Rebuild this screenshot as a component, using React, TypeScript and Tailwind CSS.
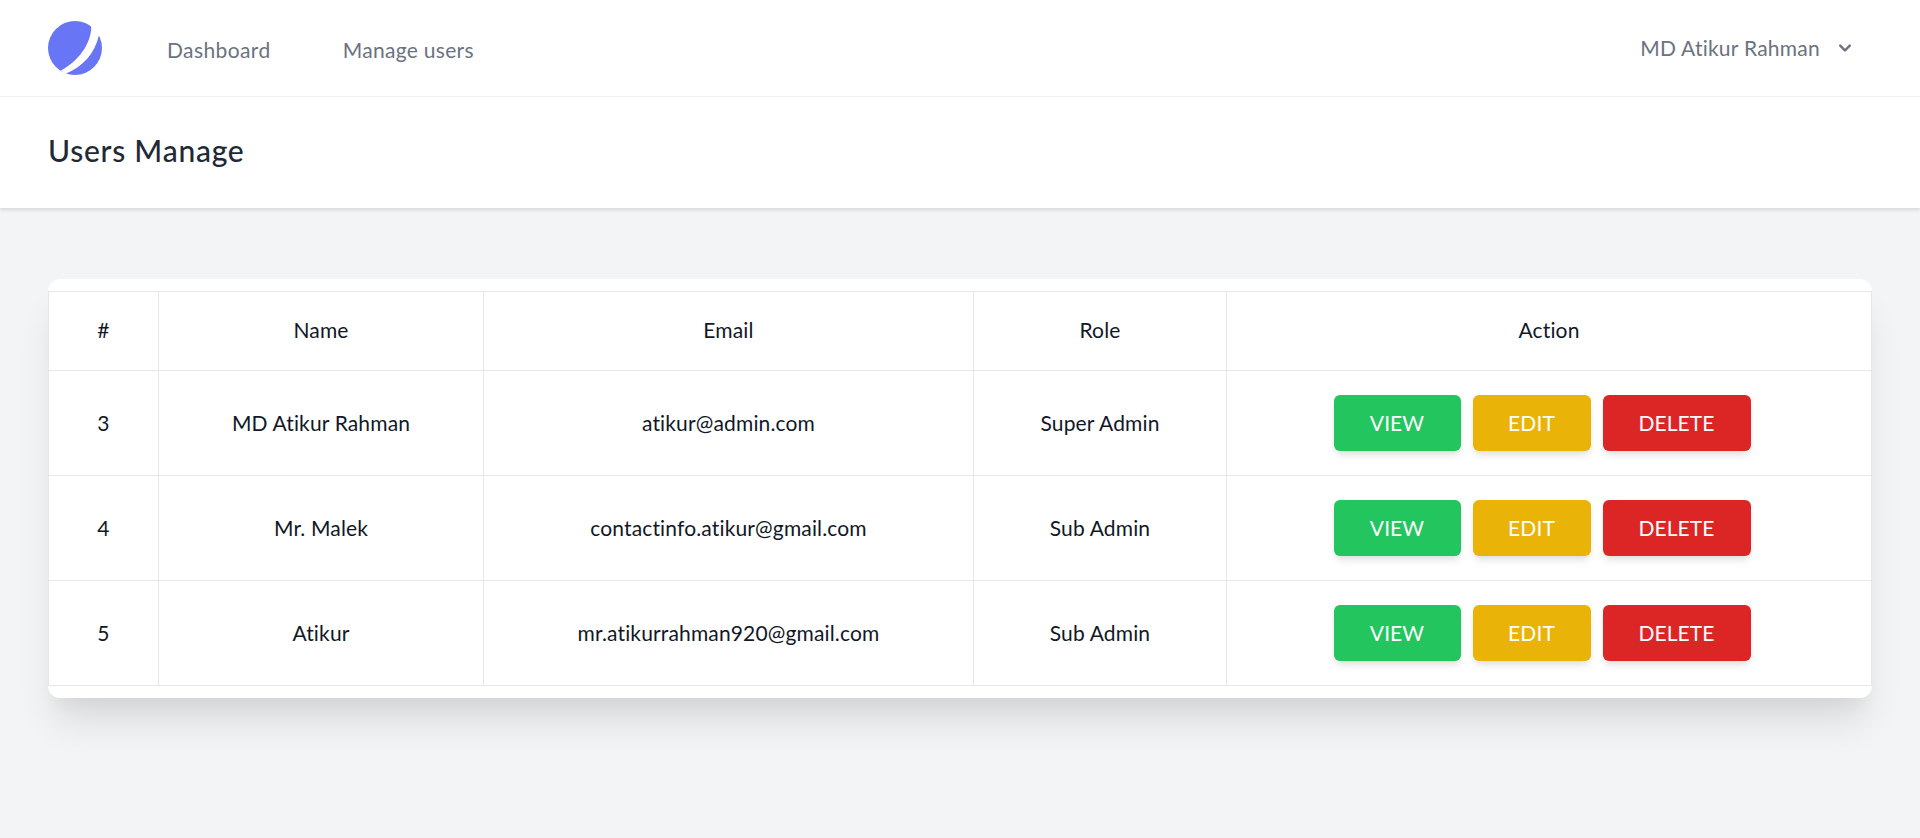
import React from 'react';

type User = { id: number; name: string; email: string; role: string };

const users: User[] = [
  { id: 3, name: 'MD Atikur Rahman', email: 'atikur@admin.com', role: 'Super Admin' },
  { id: 4, name: 'Mr. Malek', email: 'contactinfo.atikur@gmail.com', role: 'Sub Admin' },
  { id: 5, name: 'Atikur', email: 'mr.atikurrahman920@gmail.com', role: 'Sub Admin' },
];

function Logo() {
  return (
    <svg width="54" height="54" viewBox="0 0 54 54" className="block">
      <circle cx="27" cy="27" r="27" fill="#6875f5" />
      <path d="M43 2 C45 18 34 38 13 49.5 L17 53 C35 46 47 32 51 14 L54 2 Z" fill="#ffffff" />
    </svg>
  );
}

function ChevronDown() {
  return (
    <svg width="24" height="24" viewBox="0 0 20 20" fill="currentColor">
      <path
        fillRule="evenodd"
        clipRule="evenodd"
        d="M5.293 7.293a1 1 0 011.414 0L10 10.586l3.293-3.293a1 1 0 111.414 1.414l-4 4a1 1 0 01-1.414 0l-4-4a1 1 0 010-1.414z"
      />
    </svg>
  );
}

function ActionButton({ label, color }: { label: string; color: string }) {
  return (
    <button className={`h-[56px] rounded-[6px] text-[21px] tracking-[0.1px] text-white uppercase shadow-[0_6px_9px_-2px_rgba(0,0,0,0.1),0_3px_6px_-2px_rgba(0,0,0,0.06)] ${color}`}>
      {label}
    </button>
  );
}

export default function App() {
  return (
    <div className="min-h-[838px] bg-[#f3f4f6] font-['Lato',sans-serif]">
      <nav className="flex h-[97px] items-center justify-between border-b border-[#f3f4f6] bg-white pl-12 pr-[63px]">
        <div className="flex items-center">
          <Logo />
          <a className="ml-[65px] mt-[3px] text-[21px] tracking-[0.4px] text-[#6b7280]">Dashboard</a>
          <a className="ml-[72px] mt-[3px] text-[21px] tracking-[0.3px] text-[#6b7280]">Manage users</a>
        </div>
        <div className="flex items-center gap-[13px] text-[21px] tracking-[0.25px] text-[#6b7280]">
          <span>MD Atikur Rahman</span>
          <ChevronDown />
        </div>
      </nav>

      <header className="flex h-[111px] items-center bg-white pb-[5px] pl-12 shadow-[0_1.5px_4px_0_rgba(0,0,0,0.12)]">
        <h2 className="text-[30px] font-medium tracking-[0.75px] text-[#1f2937]">Users Manage</h2>
      </header>

      <main className="px-12 pt-[71px]">
        <div className="rounded-[12px] bg-white py-3 shadow-[0_30px_37px_-7px_rgba(0,0,0,0.1),0_15px_15px_-7px_rgba(0,0,0,0.04)]">
          <table className="w-full table-fixed border-collapse text-center text-[21px] tracking-[0.15px] text-[#111827]">
            <colgroup>
              <col className="w-[110px]" />
              <col className="w-[325px]" />
              <col className="w-[490px]" />
              <col className="w-[253px]" />
              <col />
            </colgroup>
            <thead>
              <tr className="h-[79px]">
                <th className="border border-[#e5e7eb] pb-[2px] font-normal">#</th>
                <th className="border border-[#e5e7eb] pb-[2px] font-normal">Name</th>
                <th className="border border-[#e5e7eb] pb-[2px] font-normal">Email</th>
                <th className="border border-[#e5e7eb] pb-[2px] font-normal">Role</th>
                <th className="border border-[#e5e7eb] pb-[2px] font-normal">Action</th>
              </tr>
            </thead>
            <tbody>
              {users.map((user) => (
                <tr key={user.id} className="h-[105px]">
                  <td className="border border-[#e5e7eb] pb-[1px]">{user.id}</td>
                  <td className="border border-[#e5e7eb] pb-[1px]">{user.name}</td>
                  <td className="border border-[#e5e7eb] pb-[1px]">{user.email}</td>
                  <td className="border border-[#e5e7eb] pb-[1px]">{user.role}</td>
                  <td className="border border-[#e5e7eb] pr-[14px] pb-[1px]">
                    <div className="flex justify-center gap-3">
                      <div className="grid w-[127px]"><ActionButton label="View" color="bg-[#22c55e]" /></div>
                      <div className="grid w-[118px]"><ActionButton label="Edit" color="bg-[#eab308]" /></div>
                      <div className="grid w-[148px]"><ActionButton label="Delete" color="bg-[#dc2626]" /></div>
                    </div>
                  </td>
                </tr>
              ))}
            </tbody>
          </table>
        </div>
      </main>
    </div>
  );
}
